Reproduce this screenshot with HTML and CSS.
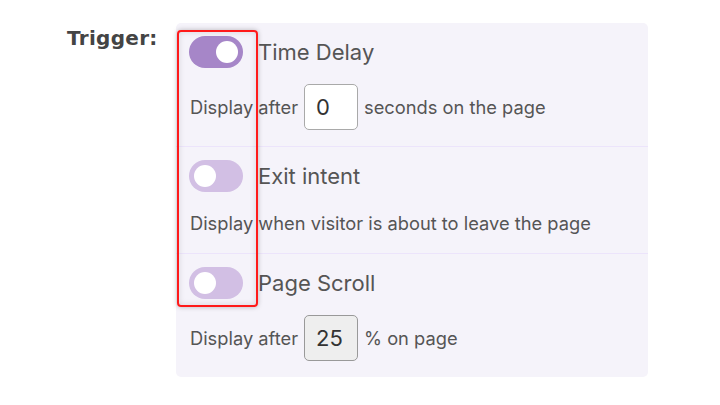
FILE: index.html
```html
<!DOCTYPE html>
<html lang="en">
  <head>
    <meta charset="UTF-8" />
    <title>Trigger</title>
    <meta name="viewport" content="width=device-width, initial-scale=1.0" />
    <link rel="stylesheet" href="styles.css">
  </head>
  <body>
    <div class="setting">
      <div class="setting-label">Trigger:</div>
      <div class="trigger-box">
        <div class="trigger">
          <div class="trigger-head">
            <span class="toggle on"><span class="knob"></span></span>
            <span class="trigger-title">Time Delay</span>
          </div>
          <div class="trigger-body">
            <span>Display after</span>
            <input class="num" type="text" value="0" />
            <span>seconds on the page</span>
          </div>
        </div>
        <div class="trigger">
          <div class="trigger-head">
            <span class="toggle"><span class="knob"></span></span>
            <span class="trigger-title">Exit intent</span>
          </div>
          <div class="trigger-body text-only">
            <span>Display when visitor is about to leave the page</span>
          </div>
        </div>
        <div class="trigger">
          <div class="trigger-head">
            <span class="toggle"><span class="knob"></span></span>
            <span class="trigger-title">Page Scroll</span>
          </div>
          <div class="trigger-body">
            <span>Display after</span>
            <input class="num" type="text" value="25" disabled />
            <span>% on page</span>
          </div>
        </div>
        <div class="highlight"></div>
      </div>
    </div>
  </body>
</html>
```

FILE: styles.css
```css
html {
  height: 100%;
}

body {
  margin: 0;
  background: #fff;
  font-family: Inter, "Open Sans", sans-serif;
  color: #555;
}

.setting {
  display: flex;
  padding: 23px 0 0 67px;
}

.setting-label {
  width: 109px;
  padding-top: 3px;
  font-family: "DejaVu Sans", sans-serif;
  font-weight: bold;
  font-size: 20px;
  letter-spacing: 0.3px;
  color: #444;
}

.trigger-box {
  position: relative;
  width: 472px;
  background: #f5f3fa;
  border-radius: 5px;
}

.trigger {
  padding: 13px 14px 16px 13px;
}

.trigger + .trigger {
  border-top: 1px solid #ece4fb;
}

.trigger-head {
  display: flex;
  align-items: center;
  gap: 15px;
  height: 32px;
}

.trigger-title {
  font-size: 22px;
  color: #555;
}

.toggle {
  display: flex;
  align-items: center;
  width: 54px;
  height: 32px;
  padding: 0 5px;
  box-sizing: border-box;
  border-radius: 16px;
  background: #d2bfe4;
}

.toggle.on {
  justify-content: flex-end;
  background: #a686c8;
}

.knob {
  width: 22px;
  height: 22px;
  border-radius: 50%;
  background: #fff;
}

.trigger-body {
  display: flex;
  align-items: center;
  gap: 6px;
  margin-top: 16px;
  padding-left: 1px;
  font-size: 18.3px;
}

.trigger-body.text-only {
  height: 29px;
}

.num {
  width: 54px;
  height: 46px;
  padding: 0 0 0 11px;
  box-sizing: border-box;
  border: 1px solid #a9a9a9;
  border-radius: 5px;
  background: #fff;
  font-family: inherit;
  font-size: 22px;
  color: #333;
  outline: none;
}

.num:disabled {
  background: #eeeeee;
  border-color: #999;
  color: #333;
}

.highlight {
  position: absolute;
  top: 7px;
  left: 1px;
  width: 81px;
  height: 277px;
  box-sizing: border-box;
  border: 2px solid #ff1a1a;
  border-radius: 4px;
  box-shadow: 0 0 5px rgba(0, 0, 0, 0.25), inset 0 0 6px rgba(0, 0, 0, 0.12);
  pointer-events: none;
}
```
